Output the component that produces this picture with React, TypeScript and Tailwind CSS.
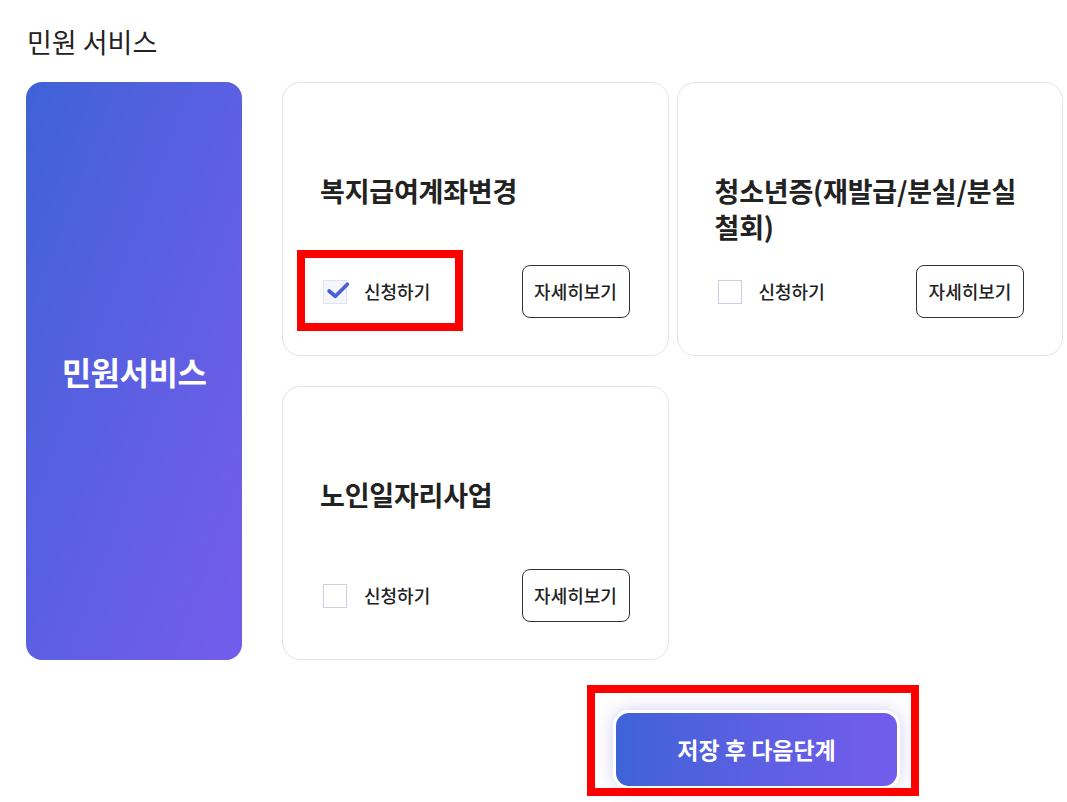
import React from 'react';

type Service = {
  title: string;
  checked: boolean;
};

const services: Service[] = [
  { title: '복지급여계좌변경', checked: true },
  { title: '청소년증(재발급/분실/분실 철회)', checked: false },
  { title: '노인일자리사업', checked: false },
];

const CheckBox = ({ checked }: { checked: boolean }) => (
  <div
    className={`relative w-6 h-6 border ${
      checked ? 'border-[#dfe3ef] bg-[#f4f6fb]' : 'border-[#c9d0e3] bg-white'
    }`}
  >
    {checked && (
      <svg viewBox="0 0 24 24" className="absolute left-[2px] top-[-3px] w-[25px] h-[25px]" fill="none">
        <path d="M3 12.5 L9 17.5 L20.5 6" stroke="#4a5fd6" strokeWidth="3.6" strokeLinecap="round" strokeLinejoin="round" />
      </svg>
    )}
  </div>
);

const ServiceCard = ({ service }: { service: Service }) => (
  <div className="h-[274px] rounded-[18px] border border-[#e3e3e3] bg-white pl-[37px] pr-[36px] pt-[90px]">
    <h3 className="min-h-[72px] text-[27px] font-bold leading-[36px] text-[#222] break-keep tracking-[-0.2px]">
      {service.title}
    </h3>
    <div className="mt-[20px] mr-[2px] flex items-center justify-between">
      <label className="ml-[3px] flex items-center gap-[17px]">
        <CheckBox checked={service.checked} />
        <span className="text-[18px] font-medium text-[#222]">신청하기</span>
      </label>
      <button className="w-[108px] h-[53px] rounded-[8px] border border-[#333] bg-white text-[18px] font-medium text-[#222]">
        자세히보기
      </button>
    </div>
  </div>
);

export default function App() {
  return (
    <div
      className="relative w-[1067px] h-[802px] overflow-hidden bg-white"
      style={{ fontFamily: '"Noto Sans CJK KR", "Noto Sans", sans-serif' }}
    >
      <div className="pl-[26px] pt-[24px]">
        <h2 className="ml-[1px] text-[27px] leading-[36px] text-[#222]">민원 서비스</h2>

        <div className="mt-[22px] flex gap-[40px]">
          {/* Left label panel */}
          <div className="w-[216px] h-[578px] rounded-[16px] bg-linear-to-br from-[#3e62d8] to-[#745cec] flex items-center justify-center">
            <span className="text-[32px] font-bold text-white tracking-[-0.5px]">민원서비스</span>
          </div>

          {/* Cards */}
          <div className="w-[781px] grid grid-cols-2 gap-x-[8px] gap-y-[30px] content-start">
            {services.map((s) => (
              <ServiceCard key={s.title} service={s} />
            ))}
          </div>
        </div>

        <div className="mt-[50px] ml-[587px]">
          <button className="w-[287px] h-[79px] rounded-[16px] border-[3px] border-white bg-linear-to-r from-[#3e62d8] to-[#745cec] shadow-[0_0_18px_rgba(90,90,210,0.28)] text-[23px] font-bold text-white">
            저장 후 다음단계
          </button>
        </div>
      </div>

      {/* Annotation boxes */}
      <div className="absolute left-[297px] top-[250px] w-[166px] h-[81px] border-[8px] border-[#ff0000]" />
      <div className="absolute left-[587px] top-[685px] w-[332px] h-[111px] border-[8px] border-[#ff0000]" />
    </div>
  );
}
